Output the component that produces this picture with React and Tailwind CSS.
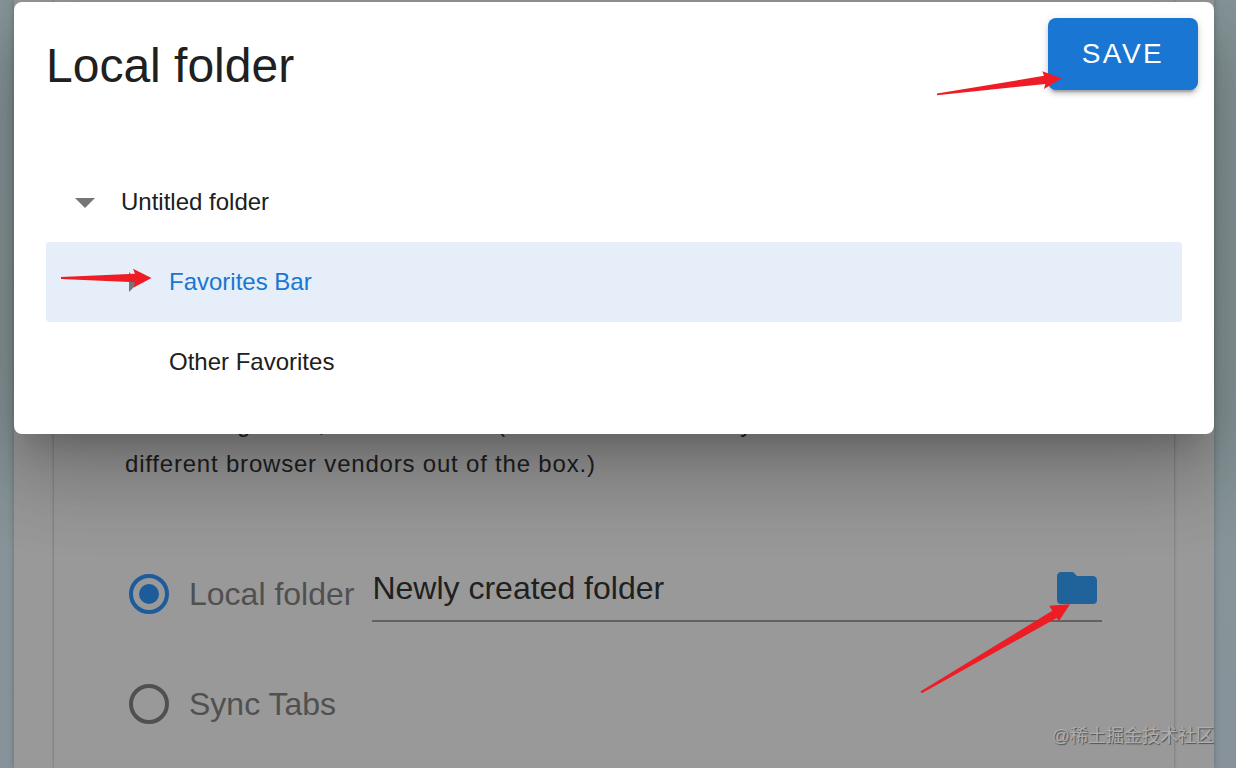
import { useState } from 'react';

const folders = [
    { id: 'root', title: 'Untitled folder', toggle: 'open', indent: 'pl-[15px]' },
    { id: 'bar', title: 'Favorites Bar', toggle: 'closed', indent: 'pl-[63px]' },
    { id: 'other', title: 'Other Favorites', toggle: null, indent: 'pl-[63px]' }
];

const togglePaths = {
    open: 'M7,10L12,15L17,10H7Z',
    closed: 'M10,17L15,12L10,7V17Z'
};

const arrows = [
    'M937,93.6 L1044,75.8 L1042.3,71.3 L1061.7,78.3 L1044,89 L1045.3,84 L937,95.2 Z',
    'M61,277 L135,273.7 L133,268.7 L151.5,278 L133.7,287.5 L135,282.3 L61,279 Z',
    'M920.4,691.6 L1052.3,610.7 L1049.3,605.7 L1070,604.3 L1059,621 L1056.7,618 L921.8,693.2 Z'
];

function Toggle({ state }) {
    return (
        <svg viewBox="0 0 24 24" className="size-12 shrink-0 fill-[#757575]" aria-hidden="true">
            {state && <path d={togglePaths[state]} />}
        </svg>
    );
}

function FolderDialog() {
    const [selected, setSelected] = useState('bar');

    return (
        <div
            role="dialog"
            aria-labelledby="dialog-title"
            className="absolute top-[2px] left-[14px] right-[22px] rounded-lg bg-white shadow-[0_22px_30px_-14px_rgba(0,0,0,0.2),0_48px_76px_6px_rgba(0,0,0,0.14),0_18px_92px_16px_rgba(0,0,0,0.12)]"
        >
            <div className="flex items-start justify-between pl-8 pr-4 pt-4 h-24">
                <h1 id="dialog-title" className="mt-4 text-[48px] leading-[64px]">Local folder</h1>
                <button
                    type="button"
                    className="h-[72px] w-[150px] rounded-lg bg-[#1976d2] text-[28px] tracking-[0.0893em] text-white shadow-[0_6px_2px_-4px_rgba(0,0,0,0.2),0_4px_4px_0_rgba(0,0,0,0.14),0_2px_10px_0_rgba(0,0,0,0.12)]"
                >
                    SAVE
                </button>
            </div>
            <ul className="px-8 pt-16 pb-8">
                {folders.map((folder) => (
                    <li key={folder.id}>
                        <button
                            type="button"
                            onClick={() => setSelected(folder.id)}
                            className={`flex h-20 w-full items-center gap-3 rounded-sm text-left text-[24px] ${folder.indent} ${selected === folder.id ? 'bg-[#e5eef9] text-[#1976d2]' : ''}`}
                        >
                            <Toggle state={folder.toggle} />
                            {folder.title}
                        </button>
                    </li>
                ))}
            </ul>
        </div>
    );
}

const radioClass = "m-1 grid size-10 shrink-0 appearance-none place-items-center rounded-full border-4 border-[#505050] checked:border-[#1d5b9b] checked:before:size-5 checked:before:rounded-full checked:before:bg-[#1d5b9b] checked:before:content-['']";

function SyncTarget() {
    const [target, setTarget] = useState('folder');

    return (
        <fieldset className="mt-[82px] flex flex-col gap-[54px] text-[32px]">
            <div className="flex h-14 items-center">
                <label className="flex items-center gap-4 text-[#505050]">
                    <input type="radio" name="target" checked={target === 'folder'} onChange={() => setTarget('folder')} className={radioClass} />
                    Local folder
                </label>
                <div className="ml-[18px] flex h-14 min-w-0 flex-1 items-center border-b-2 border-[#626262] pb-[10px]">
                    <input type="text" aria-label="Folder" defaultValue="Newly created folder" className="min-w-0 flex-1 bg-transparent outline-none" />
                    <button type="button" aria-label="Choose folder" className="pr-px">
                        <svg viewBox="0 0 24 24" className="size-12 fill-[#20639b]">
                            <path d="M10,4H4C2.89,4 2,4.89 2,6V18A2,2 0 0,0 4,20H20A2,2 0 0,0 22,18V8C22,6.89 21.1,6 20,6H12L10,4Z" />
                        </svg>
                    </button>
                </div>
            </div>
            <label className="flex h-14 items-center gap-4 text-[#505050]">
                <input type="radio" name="target" checked={target === 'tabs'} onChange={() => setTarget('tabs')} className={radioClass} />
                Sync Tabs
            </label>
        </fieldset>
    );
}

export default function App() {
    return (
        <div className="relative flex min-h-screen flex-col overflow-hidden bg-linear-to-b from-[#87979a] via-[#869698] to-[#87929a] font-['Liberation_Sans',Arial,sans-serif] text-[#202020]">
            {/* Dimmed options page */}
            <main className="ml-[14px] mr-[22px] flex flex-1 flex-col bg-[#999999] px-10 shadow-[0_0_6px_rgba(0,0,0,0.25)]">
                <section className="flex-1 bg-[#999999] pt-[404px] pb-9 pl-[71px] pr-[72px] shadow-[0_0_3px_rgba(0,0,0,0.3)]">
                    <p className="text-[24px] leading-[40px] tracking-[0.0333em]">
                        the nesting limits, and attributes (others are not usually read from
                        <br />
                        different browser vendors out of the box.)
                    </p>
                    <SyncTarget />
                </section>
            </main>

            <FolderDialog />

            {/* Hand-drawn pointers */}
            <svg className="pointer-events-none absolute top-0 left-0 h-[768px] w-[1236px] fill-[#ee1c25]" viewBox="0 0 1236 768" aria-hidden="true">
                {arrows.map((d) => <path key={d} d={d} />)}
            </svg>
            <span className="absolute right-[22px] bottom-5 font-['Liberation_Sans','Noto_Sans_CJK_SC',sans-serif] text-[18px] leading-6 text-[#aeaeae] [text-shadow:1px_1px_1px_#505050]">
                @稀土掘金技术社区
            </span>
        </div>
    );
}
